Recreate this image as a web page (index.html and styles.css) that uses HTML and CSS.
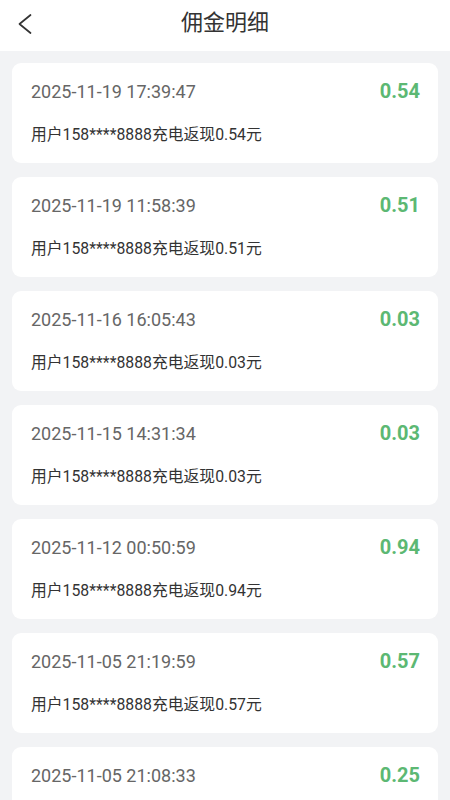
FILE: index.html
```html
<!DOCTYPE html>
<html lang="zh">
<head>
<meta charset="utf-8">
<title>佣金明细</title>
<link rel="stylesheet" href="styles.css">
</head>
<body>
<header class="topbar">
  <svg class="back" viewBox="0 0 24 24" width="24" height="24"><path d="M18.5 3 L7.5 12 L18.5 21" fill="none" stroke="#333" stroke-width="1.7" stroke-linecap="round" stroke-linejoin="round"/></svg>
  <h1 class="title">佣金明细</h1>
</header>
<main class="list">
  <div class="card"><div class="row"><span class="date">2025-11-19 17:39:47</span><span class="amt">0.54</span></div><div class="desc">用户158****8888充电返现0.54元</div></div>
  <div class="card"><div class="row"><span class="date">2025-11-19 11:58:39</span><span class="amt">0.51</span></div><div class="desc">用户158****8888充电返现0.51元</div></div>
  <div class="card"><div class="row"><span class="date">2025-11-16 16:05:43</span><span class="amt">0.03</span></div><div class="desc">用户158****8888充电返现0.03元</div></div>
  <div class="card"><div class="row"><span class="date">2025-11-15 14:31:34</span><span class="amt">0.03</span></div><div class="desc">用户158****8888充电返现0.03元</div></div>
  <div class="card"><div class="row"><span class="date">2025-11-12 00:50:59</span><span class="amt">0.94</span></div><div class="desc">用户158****8888充电返现0.94元</div></div>
  <div class="card"><div class="row"><span class="date">2025-11-05 21:19:59</span><span class="amt">0.57</span></div><div class="desc">用户158****8888充电返现0.57元</div></div>
  <div class="card"><div class="row"><span class="date">2025-11-05 21:08:33</span><span class="amt">0.25</span></div><div class="desc">用户158****8888充电返现0.25元</div></div>
</main>
</body>
</html>
```
FILE: styles.css
```css
html, body {
  margin: 0;
  padding: 0;
  background: #f2f3f5;
  font-family: Roboto, "Noto Sans CJK SC", sans-serif;
  height: 800px;
  overflow: hidden;
}
.topbar {
  height: 51px;
  background: #fff;
  display: flex;
  align-items: center;
  justify-content: center;
  position: relative;
}
.back {
  position: absolute;
  left: 12px;
  top: 12px;
}
.title {
  margin: 0;
  font-size: 22px;
  font-weight: 400;
  color: #333;
  line-height: 26px;
  margin-top: -6px;
}
.list {
  padding: 12px 12px 0;
  display: flex;
  flex-direction: column;
  gap: 14px;
}
.card {
  background: #fff;
  border-radius: 9px;
  padding: 18px 18px 18px 19px;
}
.row {
  display: flex;
  justify-content: space-between;
  align-items: center;
  height: 20px;
}
.date {
  font-size: 18px;
  color: #666;
}
.amt {
  font-size: 20px;
  font-weight: 700;
  color: #5cb873;
}
.desc {
  margin-top: 24px;
  font-size: 15.8px;
  line-height: 20px;
  color: #333;
}
```
